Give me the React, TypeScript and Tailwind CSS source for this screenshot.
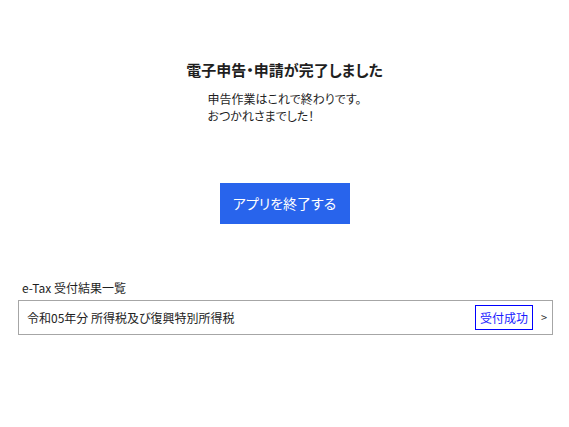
const FONT = "font-['Noto_Sans_CJK_JP','Noto_Sans',sans-serif] [font-feature-settings:'palt']"

function ResultRow({ title, status }: { readonly title: string; readonly status: string }) {
  return (
    <div className="flex h-[35px] items-center border border-[#a6a6a6] pl-2 pr-[5px]">
      <span className="flex-1 text-[12px] text-[#222]">{title}</span>
      <span className="flex h-[25px] w-[58px] items-center justify-center border border-[#0000ff] text-[12px] text-[#1a1aff]">
        {status}
      </span>
      <span className="ml-[8px] text-[11px] text-[#333]">&gt;</span>
    </div>
  )
}

export default function App() {
  return (
    <div className={`h-[427px] w-[569px] bg-white text-[#1f1f1f] ${FONT}`}>
      <div className="flex flex-col items-center pt-[58px]">
        <h1 className="text-[15px] font-bold leading-[24px]">電子申告・申請が完了しました</h1>
        <div className="mt-[8px] text-left text-[12px] leading-[17px]">
          <p>申告作業はこれで終わりです。</p>
          <p>おつかれさまでした！</p>
        </div>
        <button
          type="button"
          className="mt-[59px] h-[41px] w-[130px] bg-[#2864ec] text-[14px] text-white"
        >
          アプリを終了する
        </button>
      </div>

      <section className="ml-[18px] mr-[16px] mt-[55px]">
        <p className="pl-1 text-[12px] leading-[17px]">e-Tax 受付結果一覧</p>
        <div className="mt-[4px]">
          <ResultRow title="令和05年分 所得税及び復興特別所得税" status="受付成功" />
        </div>
      </section>
    </div>
  )
}
